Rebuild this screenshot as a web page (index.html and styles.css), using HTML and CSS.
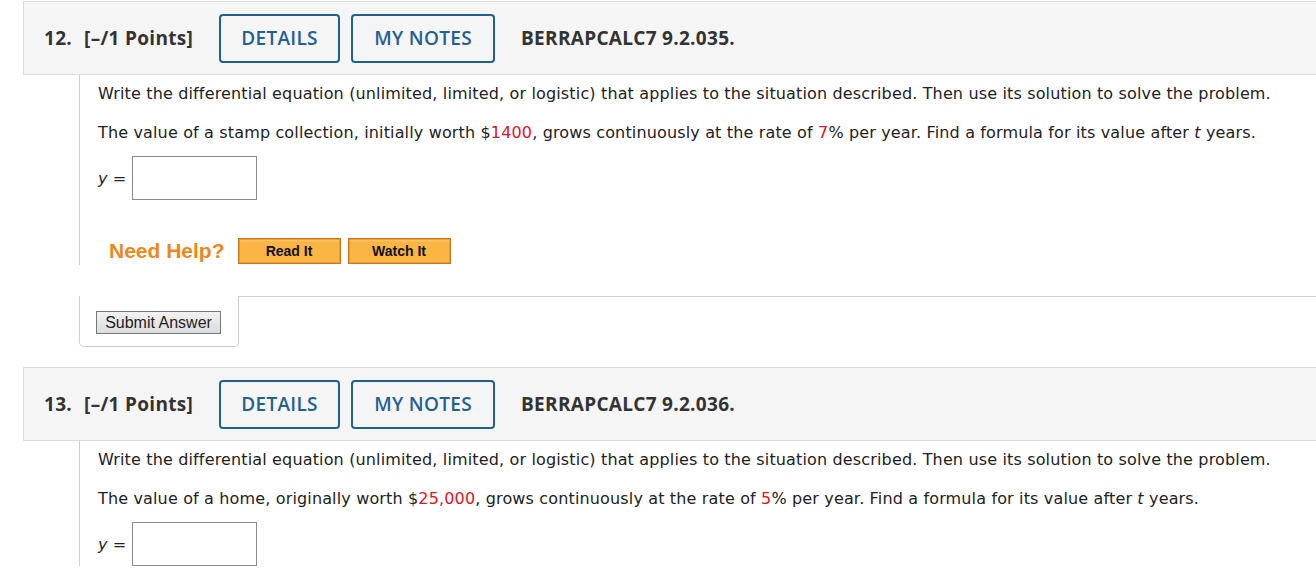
FILE: index.html
```html
<!DOCTYPE html>
<html>
<head>
<meta charset="utf-8">
<link rel="stylesheet" href="styles.css">
</head>
<body>
<div class="question">
  <div class="q-head">
    <span class="q-num">12.</span>
    <span class="q-pts">[–/1 Points]</span>
    <span class="q-btn btn-details">DETAILS</span>
    <span class="q-btn btn-notes">MY NOTES</span>
    <span class="q-code">BERRAPCALC7 9.2.035.</span>
  </div>
  <div class="q-body">
    <p class="line1">Write the differential equation (unlimited, limited, or logistic) that applies to the situation described. Then use its solution to solve the problem.</p>
    <p class="line2">The value of a stamp collection, initially worth $<span class="red">1400</span>, grows continuously at the rate of <span class="red">7</span>% per year. Find a formula for its value after <i>t</i> years.</p>
    <div class="answer"><i>y</i>&nbsp;= <span class="ans-box"></span></div>
    <div class="help">
      <span class="help-label">Need Help?</span>
      <span class="help-btn">Read It</span>
      <span class="help-btn">Watch It</span>
    </div>
  </div>
  <div class="q-foot">
    <div class="submit-tab"><span class="submit-btn">Submit Answer</span></div>
    <div class="foot-rest"></div>
  </div>
</div>

<div class="question q2">
  <div class="q-head">
    <span class="q-num">13.</span>
    <span class="q-pts">[–/1 Points]</span>
    <span class="q-btn btn-details">DETAILS</span>
    <span class="q-btn btn-notes">MY NOTES</span>
    <span class="q-code">BERRAPCALC7 9.2.036.</span>
  </div>
  <div class="q-body">
    <p class="line1">Write the differential equation (unlimited, limited, or logistic) that applies to the situation described. Then use its solution to solve the problem.</p>
    <p class="line2">The value of a home, originally worth $<span class="red">25,000</span>, grows continuously at the rate of <span class="red">5</span>% per year. Find a formula for its value after <i>t</i> years.</p>
    <div class="answer"><i>y</i>&nbsp;= <span class="ans-box"></span></div>
  </div>
</div>
</body>
</html>
```
FILE: styles.css
```css
html, body {
  margin: 0;
  padding: 0;
  background: #fff;
  overflow: hidden;
}
body {
  width: 1316px;
  height: 578px;
}
.question {
  padding-top: 1px;
}
.q2 {
  padding-top: 20px;
}
.q-head {
  margin-left: 23px;
  height: 72px;
  background: #f5f5f5;
  border: 1px solid #dcdcdc;
  border-right: none;
  display: flex;
  align-items: center;
  padding-left: 20px;
  font-family: "Open Sans", sans-serif;
  font-weight: 700;
  font-size: 19px;
  color: #333;
  letter-spacing: 0.3px;
}
.q-num {
  margin-right: 12px;
}
.q-pts {
  margin-right: 26px;
}
.q-btn {
  box-sizing: border-box;
  height: 49px;
  border: 2px solid #1f6193;
  border-radius: 4px;
  color: #1f6193;
  font-weight: 600;
  display: flex;
  align-items: center;
  justify-content: center;
  margin-right: 11px;
}
.btn-details { width: 121px; }
.btn-notes { width: 144px; margin-right: 26px; }
.q-code {
  color: #333;
}
.q-body {
  margin-left: 79px;
  border-left: 1px solid #cfcfcf;
  padding: 1px 0 0 18px;
  font-family: "DejaVu Sans", Verdana, sans-serif;
  font-size: 16px;
  letter-spacing: 0.15px;
  color: #222;
}
.q-body p {
  margin: 0;
  line-height: 20px;
}
.line1 { padding-top: 8px; }
.line2 { padding-top: 19px; }
.red { color: #e0141e; }
.answer {
  display: flex;
  align-items: center;
  margin-top: 13px;
  height: 44px;
}
.ans-box {
  display: inline-block;
  box-sizing: border-box;
  width: 125px;
  height: 44px;
  border: 1px solid #8a8a8a;
  margin-left: 6px;
}
.help {
  display: flex;
  align-items: center;
  margin-top: 37px;
  margin-left: 11px;
  height: 28px;
  letter-spacing: 0;
}
.help-label {
  font-family: "Liberation Sans", Arial, sans-serif;
  font-weight: 700;
  font-size: 21px;
  color: #f0861c;
  margin-right: 13px;
}
.help-btn {
  box-sizing: border-box;
  width: 103px;
  height: 26px;
  border: 1px solid #c87723;
  background: linear-gradient(#fdd38a 0, #fbb545 3px, #fbb545 100%);
  box-shadow: inset 0 0 0 1px #ee9a36;
  font-family: "Liberation Sans", Arial, sans-serif;
  font-weight: 700;
  font-size: 14px;
  color: #111;
  display: flex;
  align-items: center;
  justify-content: center;
  margin-right: 7px;
}
.q-foot {
  display: flex;
  margin-left: 79px;
  margin-top: 31px;
}
.submit-tab {
  box-sizing: border-box;
  width: 160px;
  height: 51px;
  border: 1px solid #cfcfcf;
  border-top: none;
  border-radius: 0 0 5px 5px;
  padding: 15px 0 0 16px;
}
.foot-rest {
  flex: 1;
  border-top: 1px solid #cfcfcf;
}
.submit-btn {
  display: inline-block;
  box-sizing: border-box;
  height: 23px;
  width: 125px;
  border: 1px solid #777;
  background: linear-gradient(#f2f2f2, #dcdcdc);
  font-family: "Liberation Sans", Arial, sans-serif;
  font-size: 16px;
  color: #222;
  text-align: center;
  line-height: 21px;
}
```
